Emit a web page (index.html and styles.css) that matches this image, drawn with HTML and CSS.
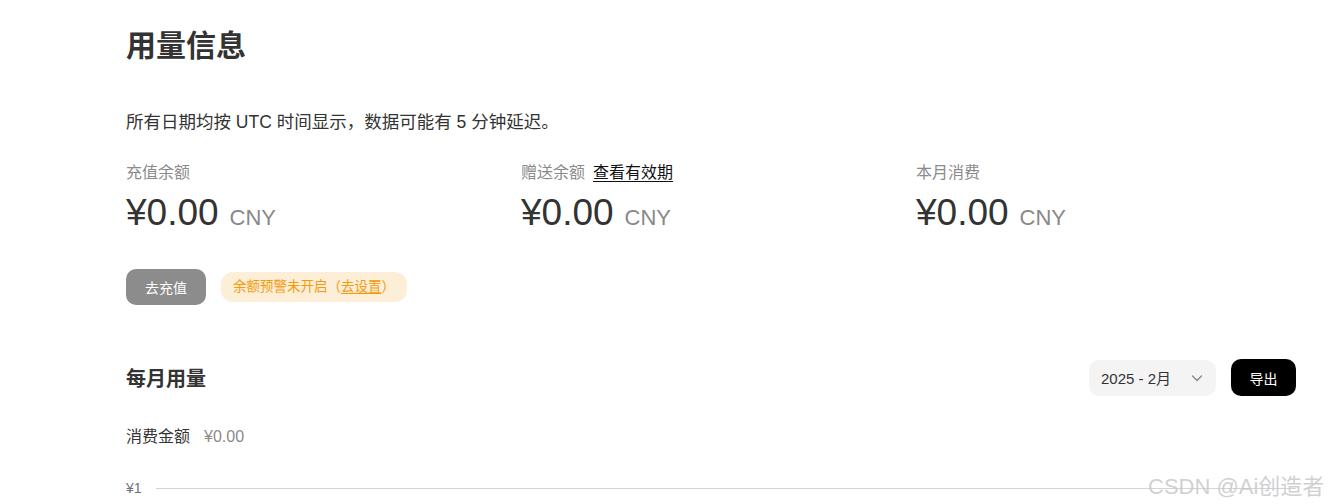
FILE: index.html
```html
<!DOCTYPE html>
<html lang="zh-CN">
<head>
<meta charset="utf-8">
<title>用量信息</title>
<link rel="stylesheet" href="styles.css">
</head>
<body>
<main class="page">
  <h1 class="title">用量信息</h1>
  <p class="note">所有日期均按 UTC 时间显示，数据可能有 5 分钟延迟。</p>
  <section class="balances">
    <div class="bal">
      <div class="bal-label">充值余额</div>
      <div class="bal-amount">¥0.00<span class="cur">CNY</span></div>
    </div>
    <div class="bal">
      <div class="bal-label">赠送余额<a class="link" href="#">查看有效期</a></div>
      <div class="bal-amount">¥0.00<span class="cur">CNY</span></div>
    </div>
    <div class="bal">
      <div class="bal-label">本月消费</div>
      <div class="bal-amount">¥0.00<span class="cur">CNY</span></div>
    </div>
  </section>
  <div class="actions">
    <button class="btn-gray">去充值</button>
    <span class="warn">余额预警未开启（<a href="#" class="warn-link">去设置</a>）</span>
  </div>
  <section class="monthly">
    <h2 class="sub">每月用量</h2>
    <div class="tools">
      <div class="select">2025 - 2月
        <svg class="chev" width="14" height="14" viewBox="0 0 14 14"><path d="M2.5 5l4.5 4.5L11.5 5" fill="none" stroke="#8a8a8a" stroke-width="1.4" stroke-linecap="round" stroke-linejoin="round"/></svg>
      </div>
      <button class="btn-black">导出</button>
    </div>
  </section>
  <div class="spend"><span class="spend-label">消费金额</span><span class="spend-val">¥0.00</span></div>
  <div class="axis"><span class="tick">¥1</span><span class="gridline"></span></div>
</main>
<div class="watermark">CSDN @Ai创造者</div>
</body>
</html>
```
FILE: styles.css
```css
html, body { margin: 0; padding: 0; background: #fff; }
body {
  font-family: "Liberation Sans", "Noto Sans CJK SC", sans-serif;
  color: #333;
  overflow: hidden;
  height: 504px;
  position: relative;
}
.page {
  margin-left: 126px;
  width: 1170px;
  padding-top: 26px;
}
.title {
  margin: 0;
  font-size: 30px;
  font-weight: 700;
  line-height: 40px;
  color: #333;
}
.note {
  margin: 42px 0 0;
  font-size: 17.5px;
  line-height: 28px;
  color: #333;
}
.balances {
  display: grid;
  grid-template-columns: 395px 395px 1fr;
  margin-top: 26px;
}
.bal-label {
  font-size: 16px;
  line-height: 22px;
  color: #8a8a8a;
  display: flex;
  gap: 8px;
}
.link { color: #111; text-decoration: underline; text-underline-offset: 3px; }
.bal-amount {
  margin-top: 6px;
  font-size: 37px;
  line-height: 46px;
  color: #333;
  font-weight: 400;
}
.cur {
  font-size: 22px;
  color: #888;
  margin-left: 11px;
}
.actions {
  display: flex;
  align-items: center;
  gap: 15px;
  margin-top: 28px;
}
.btn-gray {
  border: 0;
  background: #8c8c8c;
  color: #fff;
  font: inherit;
  font-size: 14px;
  width: 80px;
  height: 36px;
  border-radius: 10px;
  padding: 0;
}
.warn {
  background: #fdeed7;
  color: #f59a0a;
  font-size: 13.5px;
  height: 30px;
  line-height: 30px;
  padding: 0 12px;
  border-radius: 12px;
}
.warn-link { color: #f59a0a; text-decoration: underline; text-underline-offset: 2px; }
.monthly {
  display: flex;
  justify-content: space-between;
  align-items: center;
  margin-top: 54px;
}
.sub {
  margin: 0;
  font-size: 20px;
  font-weight: 700;
  color: #333;
}
.tools { display: flex; gap: 15px; align-items: center; }
.select {
  width: 127px;
  height: 36px;
  box-sizing: border-box;
  background: #f4f4f4;
  border-radius: 10px;
  padding: 0 12px;
  display: flex;
  align-items: center;
  justify-content: space-between;
  font-size: 15px;
  color: #333;
}
.chev { display: block; }
.btn-black {
  border: 0;
  background: #000;
  color: #fff;
  font: inherit;
  font-size: 14px;
  width: 65px;
  height: 37px;
  border-radius: 10px;
  padding: 0;
}
.spend {
  margin-top: 30px;
  font-size: 16px;
  line-height: 22px;
  display: flex;
  gap: 14px;
}
.spend-label { color: #333; }
.spend-val { color: #8a8a8a; }
.axis {
  margin-top: 31px;
  display: flex;
  align-items: center;
  gap: 14px;
}
.tick { font-size: 14px; color: #6b6f80; line-height: 18px; }
.gridline { flex: 1; height: 1px; background: #cfd3e2; }
.watermark {
  position: absolute;
  left: 1148px;
  top: 468px;
  font-size: 22px;
  color: rgba(200,200,200,0.85);
  font-family: "Liberation Sans", "Noto Sans CJK SC", sans-serif;
  white-space: nowrap;
}
```
